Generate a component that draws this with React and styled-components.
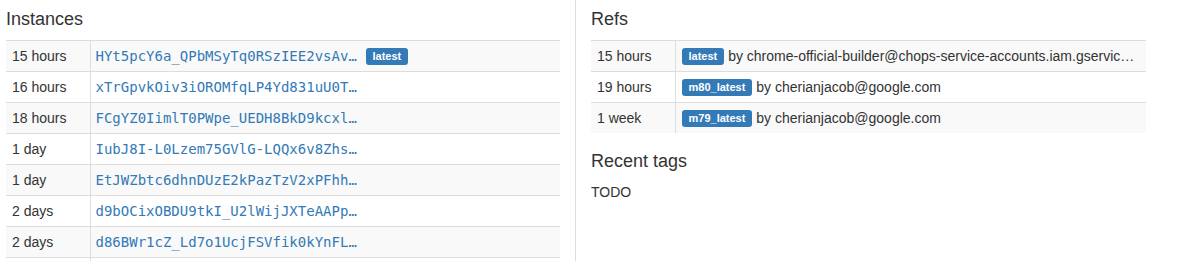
import React from 'react'
import styled, { createGlobalStyle } from 'styled-components'

const GlobalStyle = createGlobalStyle`
  html, body {
    margin: 0;
    padding: 0;
    background: #fff;
  }
  body {
    font-family: "Liberation Sans", Arial, sans-serif;
    font-size: 14px;
    line-height: 1.42857;
    color: #333;
  }
`

const instances = [
  ['15 hours', 'HYt5pcY6a_QPbMSyTq0RSzIEE2vsAvXk4n8aQ1mZ', true],
  ['16 hours', 'xTrGpvkOiv3iOROMfqLP4Yd831uU0TbW2sJk9pQe', false],
  ['18 hours', 'FCgYZ0IimlT0PWpe_UEDH8BkD9kcxlRt7vNa3yHu', false],
  ['1 day', 'IubJ8I-L0Lzem75GVlG-LQQx6v8ZhsC2mWq4kTpL', false],
  ['1 day', 'EtJWZbtc6dhnDUzE2kPazTzV2xPFhhQ1rN8sV0oC', false],
  ['2 days', 'd9bOCixOBDU9tkI_U2lWijJXTeAAPpG5hR3wLmYd', false],
  ['2 days', 'd86BWr1cZ_Ld7o1UcjFSVfik0kYnFLa9eTq2XbWs', false],
  ['3 days', 'Qm4zR8sTgH1vLpK0cY7nWb2eXa5uJdF9oI3tVhNe', false],
]

const refs = [
  ['15 hours', 'latest', 'chrome-official-builder@chops-service-accounts.iam.gserviceaccount.com'],
  ['19 hours', 'm80_latest', 'cherianjacob@google.com'],
  ['1 week', 'm79_latest', 'cherianjacob@google.com'],
]

function App() {
  return (
    <>
      <GlobalStyle />
      <Page>
        <LeftColumn>
          <Heading>Instances</Heading>
          <Table>
            <colgroup>
              <col style={{ width: 84 }} />
              <col />
            </colgroup>
            <tbody>
              {instances.map(([age, id, latest], i) => (
                <Row key={i} striped={i % 2 === 0}>
                  <AgeCell>{age}</AgeCell>
                  <Cell>
                    <InstanceId href="#">{id}</InstanceId>
                    {latest && <Tag>latest</Tag>}
                  </Cell>
                </Row>
              ))}
            </tbody>
          </Table>
        </LeftColumn>
        <RightColumn>
          <Heading>Refs</Heading>
          <Table>
            <colgroup>
              <col style={{ width: 84 }} />
              <col />
            </colgroup>
            <tbody>
              {refs.map(([age, tag, who], i) => (
                <Row key={i} striped={i % 2 === 0}>
                  <AgeCell>{age}</AgeCell>
                  <TruncCell>
                    <Tag first>{tag}</Tag> by {who}
                  </TruncCell>
                </Row>
              ))}
            </tbody>
          </Table>
          <Heading>Recent tags</Heading>
          <Body>TODO</Body>
        </RightColumn>
      </Page>
    </>
  )
}

export default App

const Page = styled.div`
display: flex;
align-items: stretch;
min-height: 261px;
`

const LeftColumn = styled.div`
box-sizing: border-box;
width: 576px;
padding: 0 15px 0 6px;
border-right: 1px solid #ddd;
`

const RightColumn = styled.div`
box-sizing: border-box;
width: 570px;
padding-left: 15px;
`

const Heading = styled.h4`
font-size: 18px;
font-weight: 500;
line-height: 1.1;
margin: 10px 0 10px;
color: #333;
`

const Table = styled.table`
width: 100%;
table-layout: fixed;
border-collapse: collapse;
border-spacing: 0;
margin-bottom: 19px;
`

const Row = styled.tr`
background: ${p => (p.striped ? '#f9f9f9' : '#fff')};
`

const Cell = styled.td`
padding: 5px;
line-height: 20px;
border-top: 1px solid #ddd;
vertical-align: top;
white-space: nowrap;
`

const AgeCell = styled(Cell)`
border-right: 1px solid #ddd;
padding-left: 6px;
`

const TruncCell = styled(Cell)`
overflow: hidden;
text-overflow: ellipsis;
`

const InstanceId = styled.a`
display: inline-block;
vertical-align: top;
width: 262px;
overflow: hidden;
text-overflow: ellipsis;
white-space: nowrap;
font-family: "DejaVu Sans Mono", "Liberation Mono", monospace;
font-size: 14px;
color: #337ab7;
text-decoration: none;
`

const Tag = styled.span`
display: inline-block;
margin-left: ${p => (p.first ? '1px' : '8px')};
padding: 3px 7px 3px;
font-size: 11px;
font-weight: bold;
line-height: 1;
color: #fff;
background: #337ab7;
border-radius: 3px;
vertical-align: 1px;
`

const Body = styled.div`
font-size: 14px;
line-height: 20px;
`
